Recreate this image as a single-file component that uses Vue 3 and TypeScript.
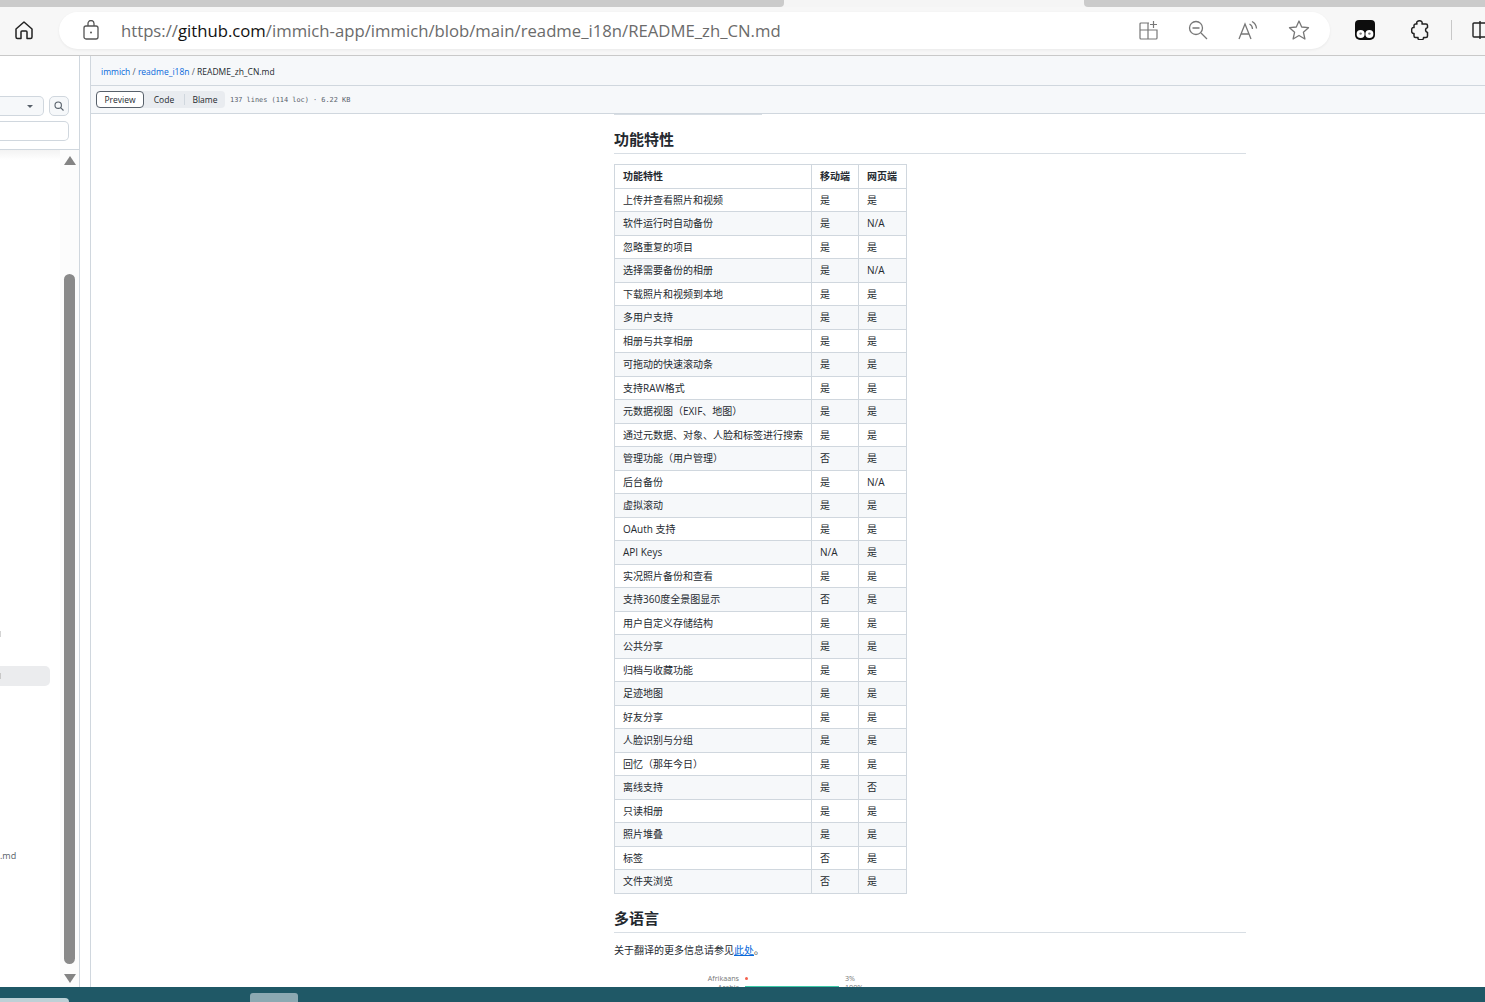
<script setup lang="ts">
interface Row { name: string; mobile: string; web: string }
const rows: Row[] = [
  ['上传并查看照片和视频', '是', '是'],
  ['软件运行时自动备份', '是', 'N/A'],
  ['忽略重复的项目', '是', '是'],
  ['选择需要备份的相册', '是', 'N/A'],
  ['下载照片和视频到本地', '是', '是'],
  ['多用户支持', '是', '是'],
  ['相册与共享相册', '是', '是'],
  ['可拖动的快速滚动条', '是', '是'],
  ['支持RAW格式', '是', '是'],
  ['元数据视图（EXIF、地图）', '是', '是'],
  ['通过元数据、对象、人脸和标签进行搜索', '是', '是'],
  ['管理功能（用户管理）', '否', '是'],
  ['后台备份', '是', 'N/A'],
  ['虚拟滚动', '是', '是'],
  ['OAuth 支持', '是', '是'],
  ['API Keys', 'N/A', '是'],
  ['实况照片备份和查看', '是', '是'],
  ['支持360度全景图显示', '否', '是'],
  ['用户自定义存储结构', '是', '是'],
  ['公共分享', '是', '是'],
  ['归档与收藏功能', '是', '是'],
  ['足迹地图', '是', '是'],
  ['好友分享', '是', '是'],
  ['人脸识别与分组', '是', '是'],
  ['回忆（那年今日）', '是', '是'],
  ['离线支持', '是', '否'],
  ['只读相册', '是', '是'],
  ['照片堆叠', '是', '是'],
  ['标签', '否', '是'],
  ['文件夹浏览', '否', '是'],
].map(([name, mobile, web]) => ({ name, mobile, web }))
</script>

<template>
  <div class="page">
    <div class="tabstrip">
      <div class="tab-grey t1"></div>
      <div class="tab-gap"></div>
      <div class="tab-grey t2"></div>
    </div>
    <header class="toolbar">
      <svg class="home" width="20" height="20" viewBox="0 0 20 20" fill="none" stroke="#222" stroke-width="1.5" stroke-linejoin="round">
        <path d="M2 9 L10 2 L18 9 V17 a1.5 1.5 0 0 1 -1.5 1.5 H13 V12 a1 1 0 0 0 -1 -1 H8 a1 1 0 0 0 -1 1 V18.5 H3.5 A1.5 1.5 0 0 1 2 17 Z" />
      </svg>
      <div class="urlbar">
        <svg class="lock" width="18" height="20" viewBox="0 0 18 20" fill="none" stroke="#555" stroke-width="1.3">
          <rect x="2" y="6" width="14" height="13" rx="2" />
          <path d="M6 6 V3.5 a3 3 0 0 1 6 0 V6" />
          <circle cx="9" cy="12.5" r="1" fill="#555" stroke="none" />
        </svg>
        <div class="url"><span>https://</span><b>github.com</b><span>/immich-app/immich/blob/main/readme_i18n/README_zh_CN.md</span></div>
        <div class="url-icons">
          <svg width="20" height="20" viewBox="-1 0 20 20" fill="none" stroke="#777" stroke-width="1.2">
            <path d="M10 3 H2 a1 1 0 0 0 -1 1 V18 a1 1 0 0 0 1 1 H17 a1 1 0 0 0 1 -1 V10 H1 M9 3 V19" />
            <path d="M14.5 1 V8 M11 4.5 H18" />
          </svg>
          <svg width="20" height="20" viewBox="0 0 20 20" fill="none" stroke="#777" stroke-width="1.3">
            <circle cx="8" cy="8" r="6.5" />
            <path d="M4.5 8 H11.5 M13 13 L19 19" />
          </svg>
          <svg width="20" height="20" viewBox="0 0 20 20" fill="none" stroke="#777" stroke-width="1.3">
            <path d="M1 19 L7 4 L13 19 M3.2 14 H10.8" />
            <path d="M11.5 4 a6 6 0 0 1 3 5 M14 1.5 a8.5 8.5 0 0 1 4.5 7" />
          </svg>
          <svg width="22" height="22" viewBox="0 0 22 22" fill="none" stroke="#777" stroke-width="1.3" stroke-linejoin="round">
            <path d="M11 2 L13.7 8 L20.5 8.7 L15.4 13.2 L16.9 20 L11 16.5 L5.1 20 L6.6 13.2 L1.5 8.7 L8.3 8 Z" />
          </svg>
        </div>
      </div>
      <div class="ext">
        <svg width="20" height="20" viewBox="0 0 20 20">
          <path d="M4 0 H16 a4 4 0 0 1 4 4 V15 a5 5 0 0 1 -5 5 H5 a5 5 0 0 1 -5 -5 V4 a4 4 0 0 1 4 -4 Z" fill="#0d0d0d" />
          <circle cx="5.6" cy="14" r="4" fill="#fff" />
          <circle cx="14.4" cy="14" r="4" fill="#fff" />
          <circle cx="5.6" cy="13.6" r="1.2" fill="#777" />
          <circle cx="14.4" cy="13.6" r="1.2" fill="#777" />
        </svg>
        <svg class="puzzle" width="20" height="20" viewBox="0 0 20 20" fill="none" stroke="#222" stroke-width="1.5" stroke-linejoin="round">
          <path d="M6 4 C5 1.5 7 .8 8.5 .8 C10.5 .8 11.6 2 11 4 H15 A1.5 1.5 0 0 1 16.5 5.5 V7.5 C15 8 14.5 9 14.5 10 C14.5 11.5 15 12 16.5 12.5 V16 A1.5 1.5 0 0 1 15 17.5 H12.5 C13 19.5 11 19.7 9.5 19.7 C8 19.7 6.5 19.3 7 17.5 H4.5 A1.5 1.5 0 0 1 3 16 V13.5 C1 13.8 .6 12 .6 10.5 C.6 9 1 7 3 7.5 V5.5 A1.5 1.5 0 0 1 4.5 4 Z" />
        </svg>
        <div class="sep"></div>
        <svg class="split" width="14" height="20" viewBox="0 0 14 20" fill="none" stroke="#222" stroke-width="1.4">
          <path d="M14 3 H2 a1 1 0 0 0 -1 1 V16 a1 1 0 0 0 1 1 H14 M8 1 V19" />
        </svg>
      </div>
    </header>

    <div class="body">
      <aside class="side">
        <div class="side-top">
          <div class="branch"><i class="caret"></i></div>
          <button class="search" aria-label="search">
            <svg width="10" height="10" viewBox="0 0 10 10" fill="none" stroke="#57606a" stroke-width="1.1">
              <circle cx="4.2" cy="4.2" r="3.2" />
              <path d="M6.6 6.6 L9.5 9.5" />
            </svg>
          </button>
        </div>
        <div class="filter"></div>
        <div class="tree">
          <div class="tree-list">
            <div class="sliver"></div>
            <div class="selected"></div>
            <div class="md">.md</div>
          </div>
          <div class="scrollbar">
            <i class="arrow up"></i>
            <div class="thumb-track"><div class="thumb"></div></div>
            <i class="arrow down"></i>
          </div>
        </div>
      </aside>
      <div class="gutter"></div>

      <main class="main">
        <div class="crumbs">
          <a>immich</a><span class="slash"> / </span><a>readme_i18n</a><span class="slash"> / </span><span class="cur">README_zh_CN.md</span>
        </div>
        <div class="filebar">
          <div class="seg">
            <span class="on">Preview</span>
            <span class="off">Code</span>
            <span class="off blame">Blame</span>
          </div>
          <span class="meta">137 lines (114 loc) · 6.22 KB</span>
        </div>
        <article class="content">
          <div class="topline"></div>
          <h2 class="h-first">功能特性</h2>
          <table>
            <thead>
              <tr><th>功能特性</th><th>移动端</th><th>网页端</th></tr>
            </thead>
            <tbody>
              <tr v-for="r in rows" :key="r.name">
                <td>{{ r.name }}</td>
                <td>{{ r.mobile }}</td>
                <td>{{ r.web }}</td>
              </tr>
            </tbody>
          </table>
          <h2 class="h-second">多语言</h2>
          <p>关于翻译的更多信息请参见<a>此处</a>。</p>
          <div class="lang-chart">
            <div class="lang-row"><span class="lang">Afrikaans</span><span class="bar"><i class="dot"></i></span><span class="pct">3%</span></div>
            <div class="lang-row"><span class="lang">Arabic</span><span class="bar"><i class="full"></i></span><span class="pct">100%</span></div>
          </div>
        </article>
      </main>
    </div>

    <footer class="taskbar">
      <div class="pill"></div>
      <div class="task"></div>
    </footer>
  </div>
</template>

<style>
html, body { margin: 0; overflow: hidden; }
</style>

<style scoped>
.page {
  width: 1485px;
  height: 1002px;
  display: flex;
  flex-direction: column;
  overflow: hidden;
  background: #fff;
  font-family: "Open Sans", "Noto Sans CJK SC", sans-serif;
}
.tabstrip { height: 7px; display: flex; background: #f5f5f5; flex: none; }
.tab-grey { background: #cbcbcb; }
.t1 { width: 784px; border-bottom-right-radius: 4px; }
.tab-gap { width: 300px; }
.t2 { flex: 1; border-bottom-left-radius: 4px; }

.toolbar {
  height: 49px;
  flex: none;
  box-sizing: border-box;
  background: #f7f7f7;
  border-bottom: 1px solid #c9c9c9;
  display: flex;
  align-items: center;
  padding-bottom: 2px;
}
.home { margin-left: 14px; flex: none; }
.urlbar {
  margin-left: 25px;
  width: 1271px;
  height: 37px;
  flex: none;
  border-radius: 19px;
  background: #fff;
  box-shadow: 0 1px 3px rgba(0,0,0,.06);
  display: flex;
  align-items: center;
  box-sizing: border-box;
  padding-left: 23px;
}
.lock { flex: none; }
.url {
  margin-left: 21px;
  font-family: "Open Sans", "Liberation Sans", sans-serif;
  font-size: 16.72px;
  color: #6b6b6b;
  white-space: nowrap;
}
.url b { font-weight: 400; color: #111; }
.url-icons {
  margin-left: auto;
  display: flex;
  align-items: center;
  gap: 30px;
  padding-right: 20px;
}
.ext { margin-left: 25px; display: flex; align-items: center; flex: none; }
.puzzle { margin-left: 36px; }
.sep { width: 1px; height: 20px; margin-left: 20px; background: #c8c8c8; }
.split { margin-left: 20px; }

.body { flex: 1; min-height: 0; display: flex; }
.side {
  width: 80px;
  flex: none;
  box-sizing: border-box;
  border-right: 1px solid #d0d7de;
  display: flex;
  flex-direction: column;
}
.side-top { display: flex; align-items: flex-end; gap: 5px; padding-top: 40px; height: 20px; }
.branch {
  width: 45px;
  margin-left: -1px;
  height: 20px;
  box-sizing: border-box;
  background: #f6f8fa;
  border: 1px solid #d0d7de;
  border-left: none;
  border-radius: 0 5px 5px 0;
  display: flex;
  align-items: center;
  justify-content: flex-end;
  padding-right: 10px;
}
.caret { border: 3px solid transparent; border-top: 3px solid #57606a; border-bottom: none; }
.search {
  width: 20px;
  height: 20px;
  padding: 0;
  background: #f6f8fa;
  border: 1px solid #d0d7de;
  border-radius: 5px;
  display: flex;
  align-items: center;
  justify-content: center;
}
.filter {
  width: 69px;
  height: 20px;
  margin-top: 5px;
  box-sizing: border-box;
  border: 1px solid #d0d7de;
  border-left: none;
  border-radius: 0 5px 5px 0;
  background: #fff;
}
.tree {
  flex: 1;
  min-height: 0;
  margin-top: 8px;
  border-top: 1px solid #d0d7de;
  display: flex;
  position: relative;
  background: linear-gradient(#f3f3f3, #fff 10px);
}
.tree-list { width: 60px; flex: none; position: relative; }
.sliver { margin-top: 481px; width: 1px; height: 6px; background: #d4d4d4; }
.selected {
  margin-top: 29px;
  width: 50px;
  height: 20px;
  background: #ebecee;
  border-radius: 0 5px 5px 0;
  display: flex;
  align-items: center;
}
.selected::before { content: ""; width: 1px; height: 6px; background: #c8c8c8; }
.md {
  margin-top: 164px;
  font-size: 9px;
  line-height: 12px;
  color: #57606a;
  font-family: "Open Sans", sans-serif;
}
.scrollbar {
  width: 19px;
  flex: none;
  background: #fcfcfc;
  display: flex;
  flex-direction: column;
  align-items: center;
  box-sizing: border-box;
  padding: 6px 0 4px;
}
.arrow { width: 0; height: 0; flex: none; border-left: 6px solid transparent; border-right: 6px solid transparent; }
.arrow.up { border-bottom: 9px solid #848484; }
.arrow.down { border-top: 9px solid #848484; }
.thumb-track { flex: 1; width: 11px; padding: 109px 0 10px; box-sizing: border-box; display: flex; }
.thumb { flex: 1; background: #8a8a8a; border-radius: 6px; }
.gutter { width: 10px; flex: none; border-right: 1px solid #d0d7de; }

.main { flex: 1; min-width: 0; display: flex; flex-direction: column; }
.crumbs {
  height: 30px;
  flex: none;
  box-sizing: border-box;
  background: #f6f8fa;
  border-bottom: 1px solid #d0d7de;
  padding-left: 10px;
  font-family: "Open Sans", sans-serif;
  font-size: 8.5px;
  line-height: 31px;
  color: #24292f;
  white-space: pre;
  overflow: hidden;
}
.crumbs a { color: #0969da; }
.crumbs .slash { color: #57606a; }
.filebar {
  height: 28px;
  flex: none;
  box-sizing: border-box;
  background: #f6f8fa;
  border-bottom: 1px solid #d0d7de;
  display: flex;
  align-items: center;
  padding-left: 5px;
}
.seg {
  display: flex;
  height: 17px;
  background: #e9ecf0;
  border-radius: 4px;
  font-family: "Open Sans", sans-serif;
  font-size: 8.5px;
  color: #24292f;
  align-items: center;
}
.seg .on {
  width: 48px;
  height: 17px;
  box-sizing: border-box;
  text-align: center;
  line-height: 15px;
  background: #fff;
  border: 1px solid #57606a;
  border-radius: 4px;
}
.seg .off { width: 40px; text-align: center; }
.seg .blame { width: 41px; border-left: 1px solid #d0d7de; box-sizing: border-box; }
.meta {
  margin-left: 5px;
  font-family: "DejaVu Sans Mono", "Liberation Mono", monospace;
  font-size: 6.9px;
  color: #57606a;
  white-space: pre;
}
.content {
  flex: 1;
  min-height: 0;
  overflow: hidden;
  box-sizing: border-box;
  width: 632px;
  margin-left: 523px;
  color: #24292f;
}
.topline { width: 148px; height: 2px; margin-top: -1px; background: #d8dee4; }
h2 {
  margin: 0;
  font-size: 15px;
  font-weight: 600;
  line-height: 24px;
  border-bottom: 1px solid #d8dee4;
  box-sizing: border-box;
}
.h-first { margin-top: 12px; height: 27px; }
.h-second { margin-top: 12px; height: 27px; }
table {
  border-collapse: collapse;
  margin-top: 10px;
  font-size: 10px;
}
th, td {
  border: 1px solid #d0d7de;
  height: 23.5px;
  padding: 0 8px;
  box-sizing: border-box;
  text-align: left;
  white-space: nowrap;
  line-height: 14px;
}
th:nth-child(3), td:nth-child(3) { width: 48px; }
th { font-weight: 600; }
tbody tr:nth-child(odd) { background: #fff; }
tbody tr:nth-child(even) { background: #f6f8fa; }
p { margin: 10px 0 0; font-size: 10px; line-height: 15px; }
p a { color: #0969da; text-decoration: underline; }
.lang-chart {
  margin-top: 16px;
  font-family: "Open Sans", sans-serif;
  font-size: 7.2px;
  color: #777;
}
.lang-row { display: flex; height: 9px; align-items: center; }
.lang { width: 125px; text-align: right; }
.bar { width: 94px; margin-left: 6px; display: flex; }
.dot { width: 3px; height: 3px; border-radius: 50%; background: #f4604c; }
.full { width: 94px; height: 2px; background: #3cc9a7; }
.pct { margin-left: 6px; }

.taskbar {
  height: 15px;
  flex: none;
  background: #1f5866;
  display: flex;
  align-items: flex-end;
  position: relative;
}
.pill { width: 69px; height: 4px; background: #bdd0d6; border-radius: 0 14px 0 0; }
.task { margin-left: 181px; width: 48px; height: 9px; background: #8ca9b2; border-radius: 3px 3px 0 0; }
</style>
